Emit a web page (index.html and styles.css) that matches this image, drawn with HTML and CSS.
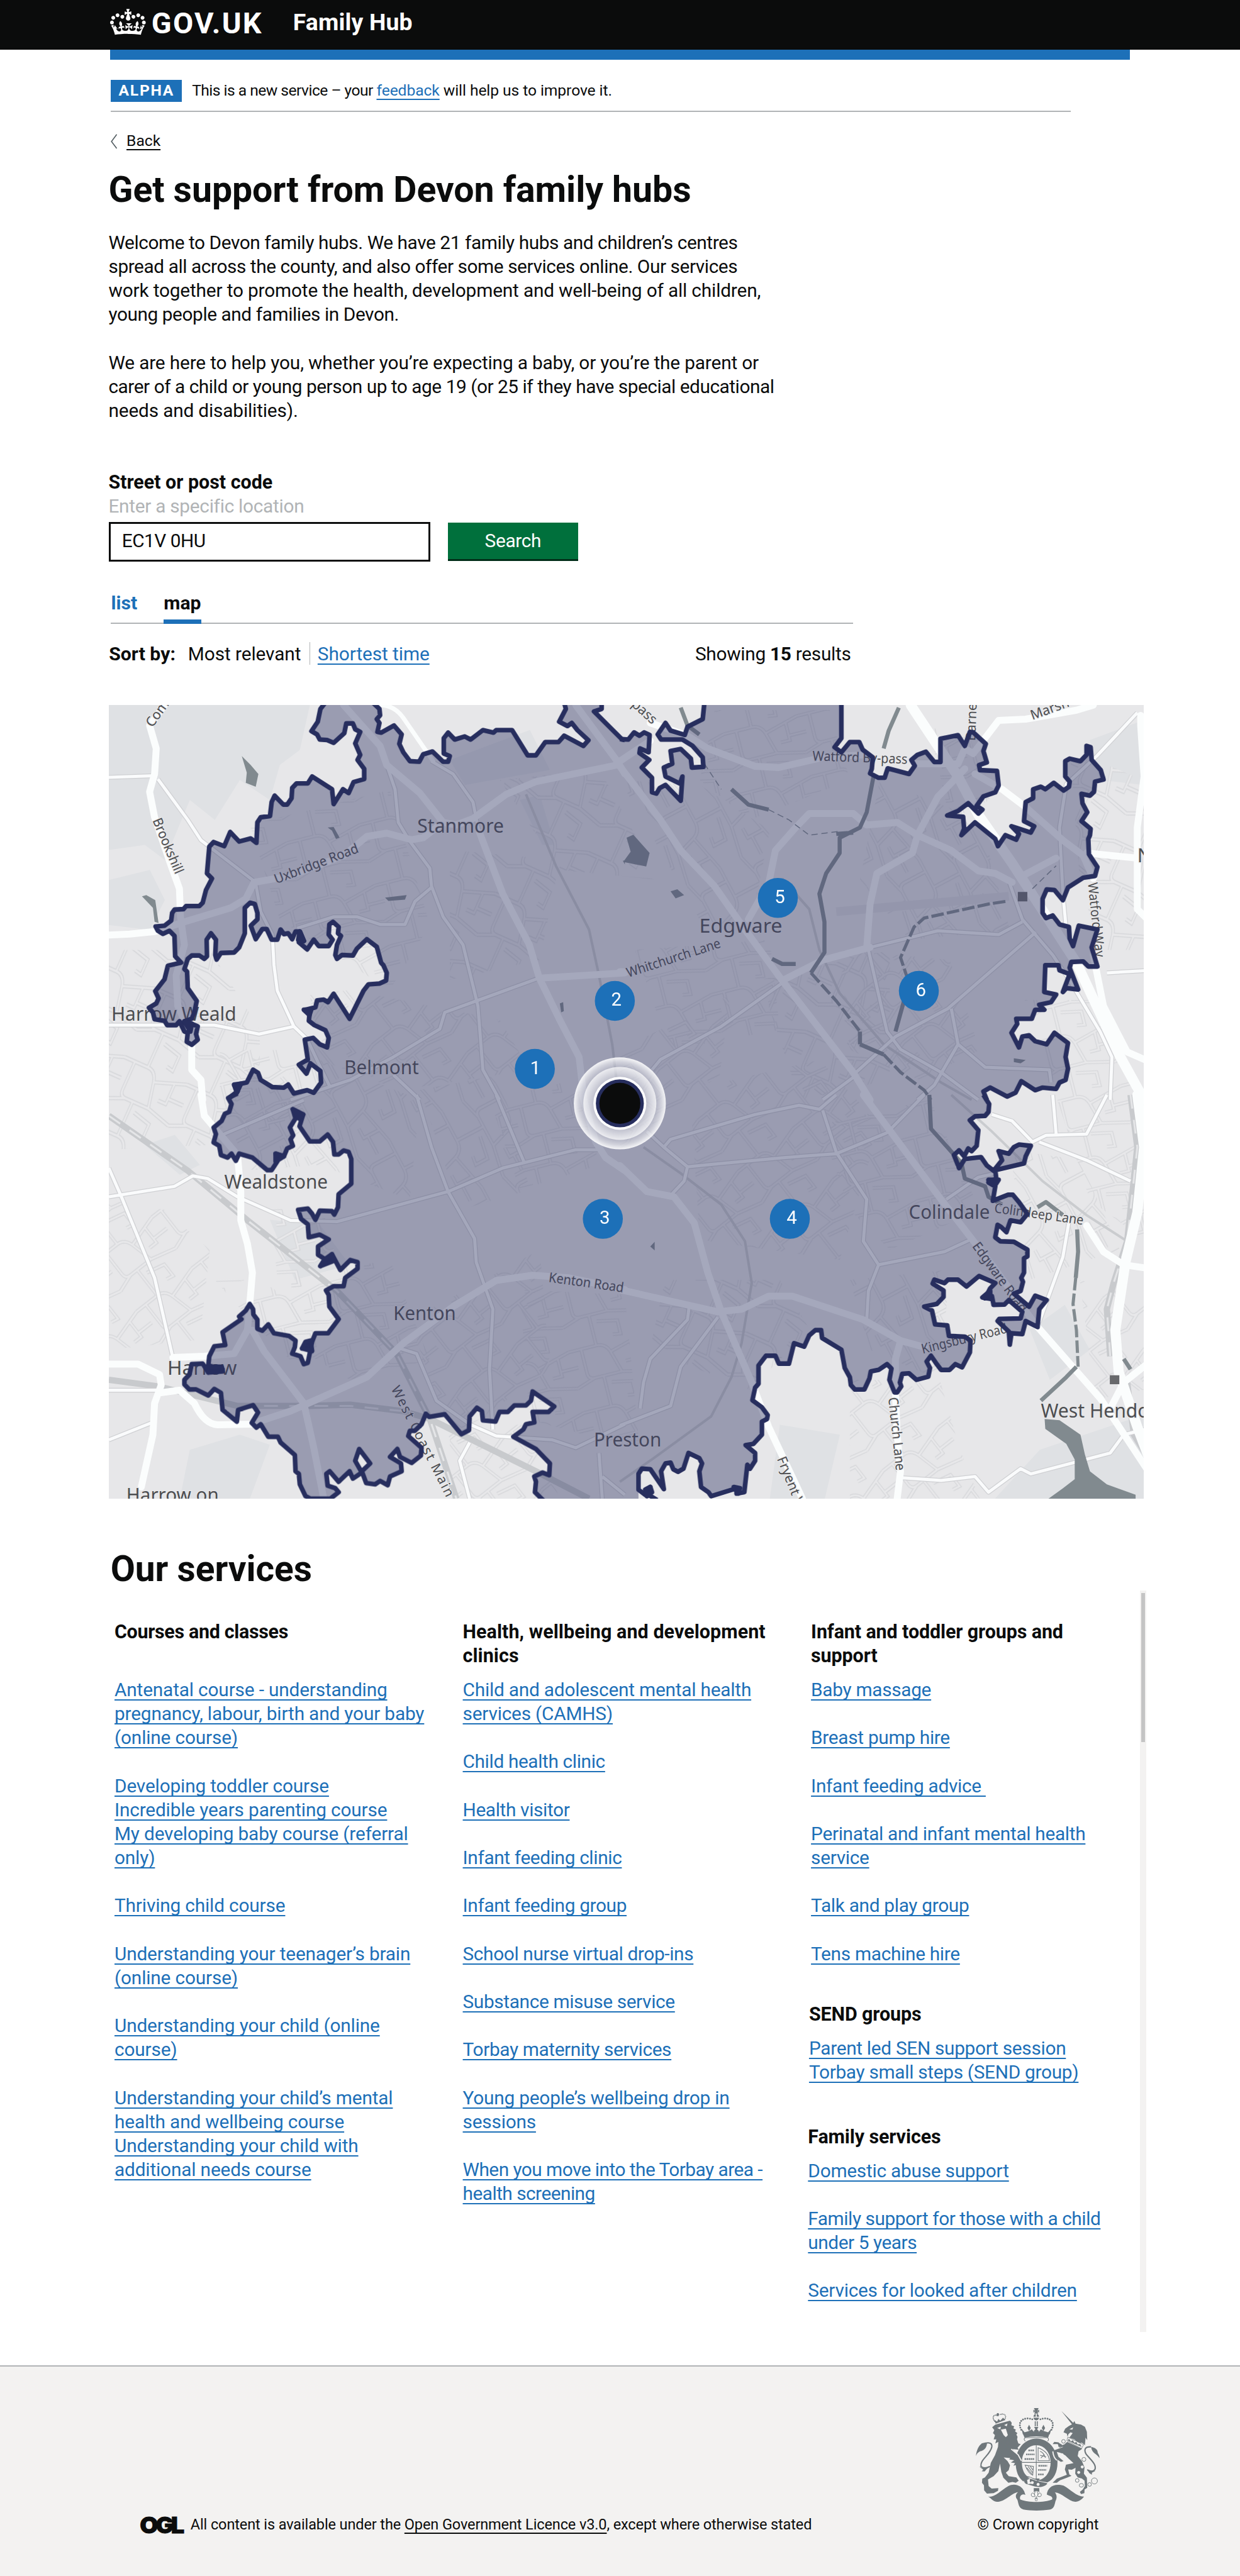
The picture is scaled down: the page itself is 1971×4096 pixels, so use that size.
FILE: index.html
```html
<!DOCTYPE html>
<html lang="en">
<head>
<meta charset="utf-8">
<title>Get support from Devon family hubs</title>
<link rel="stylesheet" href="styles.css">
</head>
<body>
<header class="header">
  <svg class="header-crown" viewBox="0 4 36 26" aria-hidden="true"><path fill="#fff" d="M6.7 12.2c1 .4 2.1-.1 2.5-1s-.1-2.1-1-2.5c-1-.4-2.1.1-2.5 1-.4 1 0 2.1 1 2.5m-4.3 2.5c1 .4 2.1-.1 2.5-1s-.1-2.1-1-2.5c-1-.4-2.1.1-2.5 1-.5 1 0 2.1 1 2.5m-1.3 4.8c1 .4 2.1-.1 2.5-1 .4-1-.1-2.1-1-2.5-1-.4-2.1.1-2.5 1-.4 1 0 2.1 1 2.5m10.4-5.8c1 .4 2.1-.1 2.5-1s-.1-2.1-1-2.5c-1-.4-2.1.1-2.5 1s0 2.1 1 2.5m17.4-1.5c-1 .4-2.1-.1-2.5-1s.1-2.1 1-2.5c1-.4 2.1.1 2.5 1 .5 1 0 2.1-1 2.5m4.3 2.5c-1 .4-2.1-.1-2.5-1s.1-2.1 1-2.5c1-.4 2.1.1 2.5 1 .5 1 0 2.1-1 2.5m1.3 4.8c-1 .4-2.1-.1-2.5-1-.4-1 .1-2.1 1-2.5 1-.4 2.1.1 2.5 1 .4 1 0 2.1-1 2.5m-10.4-5.8c-1 .4-2.1-.1-2.5-1s.1-2.1 1-2.5c1-.4 2.1.1 2.5 1s0 2.1-1 2.5m-5.3-4.9 2.4 1.3V6.5l-2.4.8c-.1-.1-.1-.2-.2-.2s1-3 1-3h-3.4l1 3c-.1.1-.2.1-.2.2-.1.1-2.4-.7-2.4-.7v3.5L17 8.8c.1.1.1.2.2.2l-1.3 4c-.1.2-.1.4-.1.6 0 1.1.8 2 1.9 2.2h.7c1-.2 1.9-1.1 1.9-2.1 0-.2 0-.4-.1-.6l-1.3-4c-.1-.2 0-.2.1-.3m-1 20.3c4.6 0 8.9.3 12.8.9 1.1-4.6 2.4-7.2 3.8-9.1l-2.6-.9c.3 1.3.3 1.9 0 2.8-.4-.4-.8-1.2-1.1-2.4l-1.2 4.2c.8-.5 1.4-.9 2-.9-1.2 2.6-2.7 3.2-3.6 3-1.2-.2-1.7-1.3-1.5-2.2.3-1.3 1.6-1.6 2.2-.1 1.1-2.4-.8-3.1-2-2.4 1.9-1.9 2.2-3.6.6-5.7-2.2 1.7-2.2 3.3-1.3 5.5-1.2-1.3-3.2-.6-2.5 1.6.9-1.4 2.1-.5 2 .8-.2 1.2-1.7 2.1-3.6 1.9-2.7-.2-2.9-2.2-2.9-3.6.7-.1 1.8.5 2.9 2l.4-4.4c-1.2 1.3-2.3 1.5-3.4 1.5.4-1.2 2.7-3.1 2.7-3.1h-5.8s2.4 1.9 2.7 3.1c-1.1 0-2.2-.2-3.4-1.5l.4 4.4c1.1-1.5 2.2-2.1 2.9-2-.1 1.5-.2 3.4-2.9 3.6-1.9.2-3.5-.7-3.6-1.9-.1-1.3 1.1-2.2 2-.8.7-2.3-1.3-2.9-2.5-1.6.9-2.2.9-3.8-1.3-5.5-1.6 2-1.3 3.8.6 5.7-1.2-.7-3.1 0-2 2.4.6-1.5 1.9-1.1 2.2.1.2.9-.3 1.9-1.5 2.2-.9.2-2.4-.5-3.6-3 .6 0 1.2.3 2 .9L4.7 20.3c-.3 1.1-.7 1.9-1.1 2.4-.3-.9-.2-1.5 0-2.8l-2.6.9C2.4 22.7 3.7 25.3 4.8 29.9c3.8-.5 8.2-.9 12.7-.9z"/></svg>
  <span class="header-logo">GOV.UK</span>
  <span class="header-service">Family Hub</span>
</header>
<div class="header-bar"></div>

<main>
  <div class="phase">
    <strong class="phase-tag">ALPHA</strong>
    <span class="phase-text"><span class="phase-lead">This is a new service – your </span><a href="#">feedback</a> will help us to improve it.</span>
  </div>

  <div class="back">
    <svg class="back-arrow" viewBox="0 0 13 30" aria-hidden="true"><path d="M12 1 1.5 15 12 29" fill="none" stroke="#505a5f" stroke-width="2"/></svg>
    <a href="#">Back</a>
  </div>

  <h1 class="title">Get support from Devon family hubs</h1>
  <p class="intro"><span class="snug">Welcome to Devon family hubs. We have 21 family hubs and children’s centres<br>spread all across the county, and also offer some services online. Our services</span><br>work together to promote the health, development and well-being of all children,<br><span class="snug">young people and families in Devon.</span></p>
  <p class="intro intro-second">We are here to help you, whether you’re expecting a baby, or you’re the parent or<br><span class="snug">carer of a child or young person up to age 19 (or 25 if they have special educational</span><br>needs and disabilities).</p>

  <form class="search">
    <label class="search-label">Street or post code</label>
    <span class="search-hint">Enter a specific location</span>
    <div class="search-row">
      <div class="search-input">EC1V 0HU</div>
      <div class="search-button">Search</div>
    </div>
  </form>

  <nav class="tabs">
    <a class="tab" href="#">list</a>
    <span class="tab tab-current">map</span>
  </nav>

  <div class="sort">
    <b class="sort-label">Sort by:</b>
    <span class="sort-current">Most relevant</span>
    <a class="sort-link" href="#">Shortest time</a>
    <span class="sort-count">Showing <b>15</b> results</span>
  </div>

  <svg class="map" viewBox="218 1410 2070 1588">
    <defs>
      <path id="tile-a" d="M0 40H90Q120 40 130 70L150 140M130 70 240 40M40 40V120Q40 140 60 140H150L240 160M0 160 60 140M90 140V200M90 0V40M200 50V110H170M0 95H18M240 95H200M110 165 175 178V200M175 0V22L150 18"/>
      <pattern id="p1" width="150" height="125" viewBox="0 0 240 200" patternUnits="userSpaceOnUse" patternTransform="rotate(-14)"><use href="#tile-a" class="st-a"/><use href="#tile-a" class="st-b"/></pattern>
      <pattern id="p2" width="136" height="150" viewBox="0 0 240 200" preserveAspectRatio="none" patternUnits="userSpaceOnUse" patternTransform="rotate(24)"><use href="#tile-a" class="st-a"/><use href="#tile-a" class="st-b"/></pattern>
      <pattern id="p3" width="170" height="120" viewBox="0 0 240 200" preserveAspectRatio="none" patternUnits="userSpaceOnUse" patternTransform="rotate(62)"><use href="#tile-a" class="st-a"/><use href="#tile-a" class="st-b"/></pattern>
      <pattern id="p4" width="140" height="130" viewBox="0 0 240 200" preserveAspectRatio="none" patternUnits="userSpaceOnUse" patternTransform="rotate(-38)"><use href="#tile-a" class="st-a"/><use href="#tile-a" class="st-b"/></pattern>

      <!-- secondary roads, one group per map sheet -->
      <g id="minor-roads">
        <g transform="translate(210 1400) scale(.66327 .5102)">
          <path d="M160 310 250 470 290 550 450 710M455 720 470 830 505 920 510 1040 520 1140 570 1280 610 1330 650 1440 680 1520M850 255 875 350 885 480 920 555 980 660 985 730 1020 850 1080 960 1110 1120 1125 1200 1140 1450 1190 1568M985 735 935 790 905 880 830 880 760 850 690 850 580 895M12 1275H330L465 1310 570 1280M1310 1090 1025 1225 1010 1290 870 1400 740 1490 560 1568M12 303 145 297M870 1470 950 1568M1130 530 1110 400 1050 290 985 240"/>
        </g>
        <g transform="translate(1240 1400) scale(.67642 .5102)">
          <path d="M740 970 940 905 1120 920 1190 870M480 1110 300 1280 120 1410 95 1450M735 980 790 1300 830 1370 950 1460 1060 1568M690 1470 815 1320 970 1210 1230 910M980 1210 1000 1350 1080 1440 1270 1450 1275 1500M1000 1350 930 1510 880 1568M1150 710 1190 860 1280 1000 1330 1100 1420 1300 1455 1400 1450 1568M1530 50 1410 220 1320 330 1300 500 1310 760 1320 900M1440 1070 1568 1060M690 1480 600 1568M1530 820 1568 870"/>
        </g>
        <g transform="translate(210 2190) scale(.66327 .52296)">
          <path d="M12 280 50 390 150 700 205 1005M12 390 210 350 265 310 310 320 400 390 560 480 700 485 1035 370 1200 280 1420 210H1490M940 0 985 200 1035 370 1115 550 1120 640 1170 820 1160 1050 1170 1280M1180 0 1265 260M890 970 940 990 1000 1170 1100 1260 1180 1305 1350 1320 1420 1350 1568 1260M12 1130H160M12 1320 140 1255M1100 1330 1070 1400 1100 1545M1490 1370 1500 1545M350 155 600 20M1500 1460 1568 1530"/>
        </g>
        <g transform="translate(1240 2190) scale(.67642 .52296)">
          <path d="M0 1265 150 1190 180 1040 290 850M60 1200 70 1100 90 1010 200 860 205 810M130 200 150 170 400 75 530 40 590 55 640 0M600 60 640 220 730 400 720 560 765 650 735 750 730 860M765 650 960 600 1035 555M200 275 280 265 485 240 640 225 790 145 900 0M80 140 130 200 200 275 190 330 150 385M965 400 1060 315 1110 300M835 1465 950 1475 1050 1460 1090 1520 1185 1430 1215 1450 1450 1370 1490 1300 1568 1275M1100 75 1160 100 1220 180 1260 155 1380 150 1440 0M1280 0 1290 150M1240 180 1380 250 1510 330M1330 470 1310 620 1240 870"/>
        </g>
      </g>
    </defs>

    <rect class="land" x="218" y="1410" width="2070" height="1588"/>

    <!-- open ground -->
    <g fill="#dfe1e4">
      <path d="M218 1410H620L600 1500 560 1530 540 1600 480 1560 430 1640 380 1600 330 1720 290 1690 218 1700ZM218 1760 300 1740 330 1800 300 1860 218 1850Z"/>
      <path d="M290 2290 350 2270 400 2330 360 2350ZM540 2440 640 2450 700 2530 590 2560ZM380 2900 480 2870 540 2890 500 2998H360Z"/>
      <path d="M2060 2660 2130 2610 2180 2700 2100 2760ZM1560 2850 1680 2870 1650 2998H1540ZM2080 2900 2288 2830V2998H1990Z"/>
      <path d="M900 1520 1060 1460 1100 1540 930 1570ZM1040 1600 1080 1590 1110 1690 1085 1690ZM2180 1480 2288 1440V1570L2200 1560Z"/>
    </g>

    <!-- residential streets -->
    <path fill="url(#p1)" d="M500 1650 780 1580 860 1850 780 1980 560 1840ZM1430 1420 1660 1420 1700 1560 1500 1640 1400 1560ZM560 2560 780 2520 860 2720 700 2760 600 2700ZM1040 2580 1250 2590 1280 2900 1060 2840ZM1270 1900 1540 1880 1560 2060 1340 2100Z"/>
    <path fill="url(#p2)" d="M218 1900 420 1900 520 2060 520 2150 420 2290 218 2300ZM900 1700 1120 1720 1080 1920 900 1960ZM1330 2560 1560 2560 1620 2660 1500 2780 1300 2700ZM1520 1960 1780 1900 1780 2160 1600 2200ZM2140 1500 2288 1560V1900H2200L2160 1760ZM1000 1560 1200 1540 1320 1760 1120 1740Z"/>
    <path fill="url(#p3)" d="M440 2210 640 2120 840 2200 820 2400 640 2330 500 2340ZM840 2180 1000 2150 1060 2380 920 2420ZM1240 1560 1400 1570 1540 1660 1500 1860 1400 1840ZM1760 1560 1960 1640 2020 1860 1820 1880 1720 1760ZM1700 2560 1900 2540 1880 2760 1740 2700ZM2020 2300 2160 2320 2240 2500 2060 2560Z"/>
    <path fill="url(#p4)" d="M218 2400 330 2420 420 2500 400 2680 218 2700ZM1380 2180 1640 2120 1760 2250 1680 2520 1400 2480ZM620 1990 700 1980 1000 2040 1060 2140 800 2180 640 2120ZM820 2640 1080 2500 1100 2740 900 2880ZM2160 2560 2288 2600V2780L2190 2800ZM900 2850 1060 2850 1120 2998H900ZM1680 1900 1900 1920 1960 2100 1840 2160 1700 2100ZM1440 2150 1240 2300 1240 2100 1460 1990ZM1700 2760 1880 2760 1920 2900 1960 2998H1700Z"/>
    <path fill="url(#p1)" d="M440 2100 620 2100 600 2280 440 2240ZM980 2200 1150 2160 1200 2330 1040 2380ZM1860 1460 1930 1440 1980 1600 1900 1640ZM2050 2000 2200 2000 2288 2200V2480L2180 2400ZM1640 2250 1860 2200 1960 2420 1780 2500 1700 2420ZM540 2420 640 2400 680 2540 560 2600ZM430 2560 520 2560 640 2640 600 2740 500 2640Z"/>

    <!-- railways -->
    <g class="rail">
      <g transform="translate(210 1400) scale(.66327 .5102)"><path d="M1270 370 1360 650 1460 900 1490 1080 1530 1350 1550 1568" class="thin"/></g>
      <g transform="translate(1240 1400) scale(.67642 .5102)"><path d="M480 700 560 820 590 980 650 1150 780 1350 950 1500 1040 1568M1150 720 1200 880 1290 1020" class="thin"/><path d="M640 830 1150 770" class="faint"/></g>
      <g transform="translate(210 2190) scale(.66327 .52296)"><path d="M12 80 250 290 430 480 700 750 880 990 980 1240 1060 1545M12 1090 160 1115 400 1190 620 1190 740 1185 900 1210 980 1240 1300 1440 1460 1545"/><path class="dash" d="M12 80 250 290 430 480 700 750 880 990 980 1240 1060 1545M480 1190H740L900 1210"/></g>
      <g transform="translate(1240 2190) scale(.67642 .52296)"><path class="thin" d="M70 200 180 300 300 420 370 560 390 720 360 950 330 1080 270 1230 100 1390 0 1480M980 0 1100 140 1250 330 1380 460 1500 560"/><path d="M1510 0 1530 200 1500 560 1460 720 1440 820 1450 1000M1500 1100 1520 1300 1568 1400"/><path class="dash" d="M1510 0 1530 200 1500 560 1460 720 1440 820 1450 1000"/></g>
    </g>

    <use href="#minor-roads" class="road-edge"/>
    <use href="#minor-roads" class="road-mid"/>

    <g class="road-main">
      <g transform="translate(210 1400) scale(.66327 .5102)">
        <path d="M0 922 75 918 150 908 240 870 380 815 425 780 450 715 560 690 720 610 790 535 850 522 925 548 960 540 1020 480 1060 490 1110 465 1210 370 1300 320 1545 255M180 20 135 100 155 190 150 290 135 360 150 460 200 650 225 740 228 850 240 960 215 1080 220 1200 262 1320V1450L290 1490 295 1568M720 20 830 180 850 255 950 365 1020 480M1130 520 1200 760 1280 960 1310 1090 1370 1250 1430 1400 1445 1568M1420 20 1545 240 1568 290M1320 1090 1568 1070"/>
        <path class="slim" d="M820 20Q870 15 900 70L990 240"/>
      </g>
      <g transform="translate(1240 1400) scale(.67642 .5102)">
        <path d="M0 260 120 470 180 590 280 730 370 900 480 1100 690 1460 740 1568M90 90 200 140 260 190 400 260 470 265 600 225 720 215M870 250H1000L1020 190 1045 210 1120 80 1200 75 1350 40 1400 20M1020 270 940 380 880 530 865 600 760 680 740 800 730 970M380 860 440 720 460 590 520 500 560 445H690L730 490 820 480 880 530 980 590 1060 670 1110 680 1160 715M480 1100 600 1020 740 970M1190 690 1290 620M1380 600 1530 620M1540 60V100L1550 300 1530 500V820L1568 870M1400 1000 1430 1200 1500 1380 1568 1420M0 1065H30M1050 290 1130 350 1200 420 1310 550 1370 610 1400 700M0 240 90 160"/>
        <path class="wide" d="M860 20 1000 300 1060 450 1160 640 1350 1030 1480 1400 1550 1568"/>
      </g>
      <g transform="translate(210 2190) scale(.66327 .52296)">
        <path d="M290 0 300 80 400 230 410 370V480L430 570 445 680 437 800 430 900 390 990 300 1000 205 1005M12 1030H100L165 1070 170 1110 150 1180 145 1300 110 1500M165 1140 225 1130 270 1180Q300 1260 340 1262L440 1260 560 1210 640 1165 790 1080 900 950 1050 810 1180 710 1290 690 1400 700 1568 745M445 900 480 980 600 1180 630 1350 660 1545M1440 0 1480 180 1510 240 1568 290"/>
      </g>
      <g transform="translate(1240 2190) scale(.67642 .52296)">
        <path d="M0 270 80 370 160 390 220 490 260 680 300 830 390 1100 440 1270 540 1545M0 745 290 830 360 820 440 770H510L720 860 830 940 900 965M720 0 950 400 1100 650 1230 880 1420 1160 1568 1450M830 940 815 1010V1140L820 1300 830 1440 820 1545M1380 500 1430 600 1490 650 1568 665M1450 1200 1490 1100 1568 1020"/>
        <path class="wide" d="M1530 0 1550 200 1530 450 1495 640 1465 900 1475 1060 1530 1270 1568 1400"/>
      </g>
    </g>

    <!-- water and stations -->
    <g class="river">
      <g transform="translate(1240 1400) scale(.67642 .5102)">
        <path d="M750 300 730 440 710 500 650 540V600L610 680 590 760 605 870V990L565 1070M450 1015 480 1035H520M710 1350 780 1390M710 1300V1350M840 1180 815 1300M330 350 380 410 440 430M640 525 690 520M825 30 795 120 780 190M180 30 200 100 235 135"/>
        <path class="dashes" d="M565 1070 640 1180 710 1300M780 1390 830 1460 900 1530 920 1568M1140 790 1090 800 900 855 870 890 830 1010 850 1090"/>
        <path class="hair" d="M250 250 300 350M440 430 500 470 560 530 650 515M1220 740 1290 650"/>
      </g>
      <g transform="translate(1240 2190) scale(.67642 .52296)">
        <path d="M915 0 920 130 1010 260 1020 320 1080 350 1090 390 1130 420M1235 430 1260 410 1310 460M1352 515 1355 600 1348 700M1350 1040 1320 1080 1245 1170M1490 1010 1510 1050"/>
        <path class="dashes" d="M1348 700 1340 800 1350 900 1355 1040"/>
      </g>
    </g>
    <g fill="#818a8f">
      <g transform="translate(210 1400) scale(.66327 .5102)"><path d="M413 220 440 255 463 290 455 340 425 325 428 285ZM112 770 125 765 152 785 162 875 150 870 145 815ZM672 500 690 498 708 540 697 545 685 512ZM845 775 910 765 905 783 855 788ZM1372 1190 1382 1185 1384 1220 1376 1225ZM1562 630H1568V645Z"/></g>
      <g transform="translate(1240 1400) scale(.67642 .5102)"><path d="M20 540 40 528 88 600 78 653 10 635 32 595ZM150 750 170 742 190 765 165 778ZM1165 1405 1200 1412 1185 1425 1165 1420Z"/></g>
      <g transform="translate(1240 2190) scale(.67642 .52296)"><path d="M1256 1240 1300 1245 1362 1300 1375 1375 1390 1440 1440 1490 1525 1530V1550H1262L1310 1505 1345 1470V1395L1320 1335 1258 1278ZM90 580 103 562V595Z"/></g>
    </g>
    <path fill="#68696c" d="M2036 1784h19v19h-19zM2220 2751h19v18h-19z"/>

    <!-- place names -->
    <g class="places">
      <text x="835" y="1666" textLength="173" lengthAdjust="spacingAndGlyphs">Stanmore</text>
      <text x="223" y="2042" textLength="250" lengthAdjust="spacingAndGlyphs">Harrow Weald</text>
      <text x="689" y="2148" textLength="149" lengthAdjust="spacingAndGlyphs">Belmont</text>
      <text x="1399" y="1865" textLength="166" lengthAdjust="spacingAndGlyphs">Edgware</text>
      <text x="449" y="2377" textLength="207" lengthAdjust="spacingAndGlyphs">Wealdstone</text>
      <text x="787" y="2641" textLength="125" lengthAdjust="spacingAndGlyphs">Kenton</text>
      <text x="335" y="2750" textLength="139" lengthAdjust="spacingAndGlyphs">Harrow</text>
      <text x="1188" y="2893" textLength="135" lengthAdjust="spacingAndGlyphs">Preston</text>
      <text x="253" y="3004" textLength="185" lengthAdjust="spacingAndGlyphs">Harrow on</text>
      <text x="1818" y="2438" textLength="162" lengthAdjust="spacingAndGlyphs">Colindale</text>
      <text x="2082" y="2835" textLength="240" lengthAdjust="spacingAndGlyphs">West Hendon</text>
      <text x="2275" y="1724">N</text>
    </g>
    <g class="streets">
      <text transform="translate(553 1768) rotate(-21)" textLength="178" lengthAdjust="spacingAndGlyphs">Uxbridge Road</text>
      <text transform="translate(305 1641) rotate(67)" textLength="118" lengthAdjust="spacingAndGlyphs">Brookshill</text>
      <text transform="translate(305 1456) rotate(-54)">Com</text>
      <text transform="translate(1257 1955) rotate(-18)" textLength="196" lengthAdjust="spacingAndGlyphs">Whitchurch Lane</text>
      <text transform="translate(1625 1521) rotate(2)" textLength="190" lengthAdjust="spacingAndGlyphs">Watford By-pass</text>
      <text transform="translate(2065 1440) rotate(-20)">Marsh Lane</text>
      <text transform="translate(1951 1482) rotate(-88)">Barnet</text>
      <text transform="translate(2176 1766) rotate(84)" textLength="150" lengthAdjust="spacingAndGlyphs">Watford Way</text>
      <text transform="translate(1262 1411) rotate(42)">pass</text>
      <text transform="translate(1097 2564) rotate(8)" textLength="151" lengthAdjust="spacingAndGlyphs">Kenton Road</text>
      <text transform="translate(782 2778) rotate(63)" textLength="245">West Coast Main</text>
      <text transform="translate(1988 2425) rotate(8)" textLength="180" lengthAdjust="spacingAndGlyphs">Colindeep Lane</text>
      <text transform="translate(1944 2493) rotate(54)" textLength="166" lengthAdjust="spacingAndGlyphs">Edgware Road</text>
      <text transform="translate(1846 2708) rotate(-14)" textLength="176" lengthAdjust="spacingAndGlyphs">Kingsbury Road</text>
      <text transform="translate(1777 2796) rotate(84)" textLength="147" lengthAdjust="spacingAndGlyphs">Church Lane</text>
      <text transform="translate(1554 2918) rotate(68)">Fryent Way</text>
    </g>

    <!-- catchment area -->
    <g opacity=".45" fill="#3c406d">
      <path transform="translate(210 1400) scale(.66327 .5102)" d="M665 15 650 35 642 85 623 122 640 135 648 155 670 157 690 168 722 130 728 92H748L755 115 770 125 755 170 770 215 762 235 782 270V310L750 322 735 365 718 350 690 408 685 350 625 300 612 327H578L565 345 563 385 550 410H538L512 375 503 400 498 455 470 460 460 480 457 560 440 543 405 555 378 518 360 573 328 557 315 575 308 680 323 700 305 745 295 795 285 808H245L237 820 210 822 203 835 200 865 180 885 153 888 160 905 175 917 195 905 210 925 212 1005 230 1030 190 1042 180 1095 152 1142 162 1170 155 1190 133 1207 145 1225 150 1252 180 1258 188 1275H215L225 1260 240 1300 250 1305 247 1340 262 1352 280 1332 275 1310 280 1280 262 1270 258 1300 240 1260 262 1250 270 1225 277 1180 250 1130 248 1065 240 1055 250 1015 262 1002H285L300 1015 308 1005 307 940 320 915 335 940 333 1000 337 1018 350 992 390 990 405 970 422 915V815L438 795 452 800 460 835V860L440 885 455 938 475 898H488L503 940H520L530 900 540 918 553 915 565 938 575 908H588L600 945 585 950 610 978 630 940 645 965H675L687 940 675 920 677 880 688 870 705 890 703 915 712 925 700 960 695 1000 700 1015 715 1000 748 1002 760 975 790 938 820 968 833 1030 840 1040 850 1070 848 1100 828 1112 795 1115 780 1140 738 1250 690 1152 673 1185 660 1175 640 1178 635 1205 605 1215 617 1235 615 1258 632 1275 665 1295 675 1325 670 1362 648 1350 628 1325 603 1332 612 1410 585 1430 608 1465 620 1425 650 1455 652 1500 630 1540 610 1530 570 1543 553 1508 540 1520 505 1518 470 1490 462 1462 447 1450 428 1500 390 1510 400 1535 375 1560V1568H1600V157H1568L1560 155 1475 45 1498 35V15H1385L1390 35 1370 85 1395 102 1408 90 1425 118 1458 158 1443 180 1385 140 1368 165H1328L1300 217H1275L1228 118H1180L1172 128 1140 118 1103 155 1085 143 1055 155 1035 128 1022 150V210L1040 220 1035 242H1020L988 202 960 213 948 242 920 240 900 205 888 172 895 135 872 100 833 128 822 125 828 90 820 75 830 60 828 35 808 15Z"/>
      <path transform="translate(1240 1400) scale(.67642 .5102)" d="M0 153 25 155 42 127 58 140 72 127 88 137 85 205 60 190 58 208 87 235 65 265 95 305V362L108 367 118 345 135 333 180 395 185 300 178 328 135 300 130 265 155 250 150 200 180 192 210 230 213 265 247 262 245 225 215 180 185 155H122L112 135 135 90 150 120 192 137 200 105 245 75 250 15H655V150L635 185 655 205 680 165H708L718 195 748 225 745 270 740 288 765 305H783L792 268 855 290 872 258 862 235 880 215 905 203 930 243H948V152L1000 138 1020 180 1035 125 1045 127 1082 172 1075 200 1085 245 1062 255 1065 275 1115 278 1120 335 1110 362 1075 378 1055 415 1072 430 1060 445 1030 405 1000 435 968 453 1015 458 1018 505 1010 530 1050 480 1110 545 1118 573 1140 530 1172 548 1180 525 1158 495 1215 520 1225 495 1195 475 1200 400 1222 385V350L1245 340 1258 350 1283 325 1312 355 1328 340 1330 320 1317 300V240L1330 230 1362 240 1380 215V180L1392 185 1395 235 1422 275 1430 312 1405 320 1402 360 1390 375 1365 368 1368 405 1382 440 1365 475 1392 505 1390 530 1385 545 1387 605 1412 655 1405 690 1370 697 1325 735 1310 785 1285 745 1262 743 1250 780V835L1260 855 1280 845 1300 880 1328 890 1330 935 1340 965 1357 885 1412 900 1395 970 1412 1045H1385L1370 1025 1335 1027 1330 1050 1355 1135 1320 1130 1310 1145 1330 1075 1300 1060 1297 1040H1258L1255 1145 1290 1155 1275 1185 1240 1195 1255 1215H1228L1218 1250H1172L1175 1270 1158 1305 1180 1362 1190 1320 1210 1315 1228 1338 1262 1350 1285 1305 1325 1345 1318 1400 1325 1445 1318 1490 1300 1500 1290 1525 1250 1520 1228 1530 1187 1495 1170 1540 1145 1555 1095 1520 1075 1535 1085 1568H0Z"/>
      <path transform="translate(210 2190) scale(.66327 .52296)" d="M372 5V12L382 35 375 65 362 72 352 100 328 125 335 150 328 182 345 195 350 230 370 240 382 225 395 252 405 225 445 240 490 288H503L520 255 515 225 540 235 550 205 567 195 560 170 568 155 558 125 575 90 567 55 598 75 587 120 618 178H648L672 152 688 180 692 228H705L720 213 735 218 743 245V340L705 380 703 430 692 458 685 445 648 443 635 478 625 455 612 435 583 440 592 475 612 495 615 545 648 535 675 553 643 580V612L663 628 650 655 685 610 710 670 740 632 762 640V665L725 700 720 732H690L667 748 675 765 677 810 705 858 673 912H635L620 960 595 970 625 945 612 1025 600 1030 590 1000 565 990 573 965 575 940 555 922 510 912 493 878 475 902 460 895V860L448 840 447 820 437 800 425 825 405 848 412 858 355 908 363 957 330 962 315 1000 312 1035 355 1050 312 1062 295 1028 262 1030 255 1070 240 1090V1108L255 1127H275L312 1150 330 1125 350 1140 355 1205 398 1250 402 1205 447 1187 462 1215 443 1255 457 1273 470 1260 493 1308H522L530 1330 573 1378 575 1440 585 1450 588 1490 605 1535 620 1550H680L705 1520 695 1505 672 1495 668 1450 678 1440 705 1480 738 1440 748 1468 775 1445 755 1400 767 1355 800 1410 775 1440 788 1485 815 1490 830 1477 853 1493 860 1460 895 1440 893 1410 860 1385 882 1355 890 1385 925 1408 953 1380 955 1350 915 1305 920 1285H935L955 1260 968 1220 978 1232 1025 1222 1075 1298 1098 1283 1100 1230 1122 1197 1137 1210 1140 1245 1178 1250 1190 1213H1215L1235 1188H1270L1285 1170 1290 1135 1355 1192 1338 1213H1290L1295 1253 1270 1260 1262 1280 1232 1308 1300 1355 1342 1410 1340 1455 1320 1445 1295 1460 1300 1480 1297 1520 1320 1550H1600V5Z"/>
      <path transform="translate(1240 2190) scale(.67642 .52296)" d="M0 0H1075L1092 35 1090 65 1080 80 1050 82 1035 97 1060 135 1055 195 1040 215 1030 205 1018 235 1003 212 988 230 1003 280 1020 245 1068 238 1085 270 1105 290 1130 250 1120 215 1150 225 1165 200 1180 190 1215 195 1200 235 1195 262 1110 288 1113 320 1090 335 1110 350 1103 405 1148 382H1162L1180 410 1205 455 1185 487 1155 480 1143 525 1127 505 1117 497 1110 545 1125 560 1165 562 1205 592V618L1195 625V680L1187 700 1192 715 1185 750 1165 760 1210 810 1228 768 1262 785 1240 820 1235 888 1200 865 1190 915 1158 912 1153 955 1150 905 1117 865 1122 857 1185 855 1190 830 1150 785 1137 802 1105 803 1100 770 1080 778 1095 740 1110 720 1062 693 1025 733 1000 707H970L960 720 930 707 925 722 957 748V773L937 800 900 810 923 825 932 878 968 882 973 922 1020 925 1037 940 1035 985 1012 1042 992 1030 975 1052H950L937 1030 920 998 907 1020 917 1045 912 1078 877 1090 855 1065 835 1067 828 1100 832 1115 820 1138H812L797 1090 803 1047 790 1030 765 1052 742 1058 738 1085 723 1127H695L683 1110 680 1080 665 1045 655 975 598 930 595 900H578L560 920 545 963 515 950 500 1028H470L460 998H432L410 1035V1105L400 1120 392 1168 420 1195 437 1225 435 1240 420 1250V1300L395 1335 372 1340 400 1370V1400L385 1430 377 1415 368 1520 345 1525V1505L270 1535 262 1520 240 1500 235 1440 243 1410 235 1390 203 1370 188 1430 172 1442 158 1432 150 1407 135 1410 122 1440 130 1508 90 1432 65 1430 55 1450V1550H0Z"/>
    </g>
    <g class="boundary">
      <path transform="translate(210 1400) scale(.66327 .5102)" d="M665 10 650 35 642 85 623 122 640 135 648 155 670 157 690 168 722 130 728 92H748L755 115 770 125 755 170 770 215 762 235 782 270V310L750 322 735 365 718 350 690 408 685 350 625 300 612 327H578L565 345 563 385 550 410H538L512 375 503 400 498 455 470 460 460 480 457 560 440 543 405 555 378 518 360 573 328 557 315 575 308 680 323 700 305 745 295 795 285 808H245L237 820 210 822 203 835 200 865 180 885 153 888 160 905 175 917 195 905 210 925 212 1005 230 1030 190 1042 180 1095 152 1142 162 1170 155 1190 133 1207 145 1225 150 1252 180 1258 188 1275H215L225 1260 240 1300 250 1305 247 1340 262 1352 280 1332 275 1310 280 1280 262 1270 258 1300 240 1260 262 1250 270 1225 277 1180 250 1130 248 1065 240 1055 250 1015 262 1002H285L300 1015 308 1005 307 940 320 915 335 940 333 1000 337 1018 350 992 390 990 405 970 422 915V815L438 795 452 800 460 835V860L440 885 455 938 475 898H488L503 940H520L530 900 540 918 553 915 565 938 575 908H588L600 945 585 950 610 978 630 940 645 965H675L687 940 675 920 677 880 688 870 705 890 703 915 712 925 700 960 695 1000 700 1015 715 1000 748 1002 760 975 790 938 820 968 833 1030 840 1040 850 1070 848 1100 828 1112 795 1115 780 1140 738 1250 690 1152 673 1185 660 1175 640 1178 635 1205 605 1215 617 1235 615 1258 632 1275 665 1295 675 1325 670 1362 648 1350 628 1325 603 1332 612 1410 585 1430 608 1465 620 1425 650 1455 652 1500 630 1540 610 1530 570 1543 553 1508 540 1520 505 1518 470 1490 462 1462 447 1450 428 1500 390 1510 400 1535 375 1560M1568 157 1560 155 1475 45 1498 35V10M1385 10 1390 35 1370 85 1395 102 1408 90 1425 118 1458 158 1443 180 1385 140 1368 165H1328L1300 217H1275L1228 118H1180L1172 128 1140 118 1103 155 1085 143 1055 155 1035 128 1022 150V210L1040 220 1035 242H1020L988 202 960 213 948 242 920 240 900 205 888 172 895 135 872 100 833 128 822 125 828 90 820 75 830 60 828 35 808 10"/>
      <path transform="translate(1240 1400) scale(.67642 .5102)" d="M0 153 25 155 42 127 58 140 72 127 88 137 85 205 60 190 58 208 87 235 65 265 95 305V362L108 367 118 345 135 333 180 395 185 300 178 328 135 300 130 265 155 250 150 200 180 192 210 230 213 265 247 262 245 225 215 180 185 155H122L112 135 135 90 150 120 192 137 200 105 245 75 250 10M655 10V150L635 185 655 205 680 165H708L718 195 748 225 745 270 740 288 765 305H783L792 268 855 290 872 258 862 235 880 215 905 203 930 243H948V152L1000 138 1020 180 1035 125 1045 127 1082 172 1075 200 1085 245 1062 255 1065 275 1115 278 1120 335 1110 362 1075 378 1055 415 1072 430 1060 445 1030 405 1000 435 968 453 1015 458 1018 505 1010 530 1050 480 1110 545 1118 573 1140 530 1172 548 1180 525 1158 495 1215 520 1225 495 1195 475 1200 400 1222 385V350L1245 340 1258 350 1283 325 1312 355 1328 340 1330 320 1317 300V240L1330 230 1362 240 1380 215V180L1392 185 1395 235 1422 275 1430 312 1405 320 1402 360 1390 375 1365 368 1368 405 1382 440 1365 475 1392 505 1390 530 1385 545 1387 605 1412 655 1405 690 1370 697 1325 735 1310 785 1285 745 1262 743 1250 780V835L1260 855 1280 845 1300 880 1328 890 1330 935 1340 965 1357 885 1412 900 1395 970 1412 1045H1385L1370 1025 1335 1027 1330 1050 1355 1135 1320 1130 1310 1145 1330 1075 1300 1060 1297 1040H1258L1255 1145 1290 1155 1275 1185 1240 1195 1255 1215H1228L1218 1250H1172L1175 1270 1158 1305 1180 1362 1190 1320 1210 1315 1228 1338 1262 1350 1285 1305 1325 1345 1318 1400 1325 1445 1318 1490 1300 1500 1290 1525 1250 1520 1228 1530 1187 1495 1170 1540 1145 1555 1095 1520 1075 1535 1085 1568"/>
      <path transform="translate(210 2190) scale(.66327 .52296)" d="M400 -5 372 12 382 35 375 65 362 72 352 100 328 125 335 150 328 182 345 195 350 230 370 240 382 225 395 252 405 225 445 240 490 288H503L520 255 515 225 540 235 550 205 567 195 560 170 568 155 558 125 575 90 567 55 598 75 587 120 618 178H648L672 152 688 180 692 228H705L720 213 735 218 743 245V340L705 380 703 430 692 458 685 445 648 443 635 478 625 455 612 435 583 440 592 475 612 495 615 545 648 535 675 553 643 580V612L663 628 650 655 685 610 710 670 740 632 762 640V665L725 700 720 732H690L667 748 675 765 677 810 705 858 673 912H635L620 960 595 970 625 945 612 1025 600 1030 590 1000 565 990 573 965 575 940 555 922 510 912 493 878 475 902 460 895V860L448 840 447 820 437 800 425 825 405 848 412 858 355 908 363 957 330 962 315 1000 312 1035 355 1050 312 1062 295 1028 262 1030 255 1070 240 1090V1108L255 1127H275L312 1150 330 1125 350 1140 355 1205 398 1250 402 1205 447 1187 462 1215 443 1255 457 1273 470 1260 493 1308H522L530 1330 573 1378 575 1440 585 1450 588 1490 605 1535 620 1545H680L705 1520 695 1505 672 1495 668 1450 678 1440 705 1480 738 1440 748 1468 775 1445 755 1400 767 1355 800 1410 775 1440 788 1485 815 1490 830 1477 853 1493 860 1460 895 1440 893 1410 860 1385 882 1355 890 1385 925 1408 953 1380 955 1350 915 1305 920 1285H935L955 1260 968 1220 978 1232 1025 1222 1075 1298 1098 1283 1100 1230 1122 1197 1137 1210 1140 1245 1178 1250 1190 1213H1215L1235 1188H1270L1285 1170 1290 1135 1355 1192 1338 1213H1290L1295 1253 1270 1260 1262 1280 1232 1308 1300 1355 1342 1410 1340 1455 1320 1445 1295 1460 1300 1480 1297 1520 1325 1555"/>
      <path transform="translate(1240 2190) scale(.67642 .52296)" d="M1075 0 1092 35 1090 65 1080 80 1050 82 1035 97 1060 135 1055 195 1040 215 1030 205 1018 235 1003 212 988 230 1003 280 1020 245 1068 238 1085 270 1105 290 1130 250 1120 215 1150 225 1165 200 1180 190 1215 195 1200 235 1195 262 1110 288 1113 320 1090 335 1110 350 1103 405 1148 382H1162L1180 410 1205 455 1185 487 1155 480 1143 525 1127 505 1117 497 1110 545 1125 560 1165 562 1205 592V618L1195 625V680L1187 700 1192 715 1185 750 1165 760 1210 810 1228 768 1262 785 1240 820 1235 888 1200 865 1190 915 1158 912 1153 955 1150 905 1117 865 1122 857 1185 855 1190 830 1150 785 1137 802 1105 803 1100 770 1080 778 1095 740 1110 720 1062 693 1025 733 1000 707H970L960 720 930 707 925 722 957 748V773L937 800 900 810 923 825 932 878 968 882 973 922 1020 925 1037 940 1035 985 1012 1042 992 1030 975 1052H950L937 1030 920 998 907 1020 917 1045 912 1078 877 1090 855 1065 835 1067 828 1100 832 1115 820 1138H812L797 1090 803 1047 790 1030 765 1052 742 1058 738 1085 723 1127H695L683 1110 680 1080 665 1045 655 975 598 930 595 900H578L560 920 545 963 515 950 500 1028H470L460 998H432L410 1035V1105L400 1120 392 1168 420 1195 437 1225 435 1240 420 1250V1300L395 1335 372 1340 400 1370V1400L385 1430 377 1415 368 1520 345 1525V1505L270 1535 262 1520 240 1500 235 1440 243 1410 235 1390 203 1370 188 1430 172 1442 158 1432 150 1407 135 1410 122 1440 130 1508 90 1432 65 1430 55 1450V1510L75 1530 90 1500 85 1530 110 1550"/>
      <g class="blob">
        <path transform="translate(210 1400) scale(.66327 .5102)" d="M588 908 600 945 583 940ZM240 1260 262 1270 255 1290ZM600 1215 617 1235 622 1215ZM390 1508 410 1505 398 1540Z"/>
        <path transform="translate(210 2190) scale(.66327 .52296)" d="M567 55 598 75 585 90ZM515 225 540 235 515 255ZM650 655 690 635 685 610 665 628ZM595 970 625 980 620 940 605 945ZM312 1062 355 1058 352 1040 305 1040Z"/>
        <path transform="translate(1240 2190) scale(.67642 .52296)" d="M1090 325 1120 325 1110 345ZM1072 775 1095 780 1095 750ZM75 1510 90 1500 95 1520 80 1535ZM337 1500 355 1505 350 1525Z"/>
      </g>
    </g>

    <!-- searched location -->
    <radialGradient id="halo" gradientUnits="userSpaceOnUse" cx="1240" cy="2207" r="92"><stop offset=".78" stop-color="#fff" stop-opacity=".25"/><stop offset=".9" stop-color="#fff" stop-opacity=".55"/><stop offset="1" stop-color="#fff" stop-opacity=".9"/></radialGradient>
    <radialGradient id="halo-inner" gradientUnits="userSpaceOnUse" cx="1240" cy="2207" r="73"><stop offset=".7" stop-color="#fff" stop-opacity=".15"/><stop offset="1" stop-color="#fff" stop-opacity=".75"/></radialGradient>
    <circle cx="1240" cy="2207" r="92" fill="url(#halo)"/>
    <circle cx="1240" cy="2207" r="73" fill="url(#halo-inner)"/>
    <circle cx="1240" cy="2207" r="53" fill="#fff"/>
    <circle cx="1240" cy="2207" r="48" fill="#272e5e"/>
    <circle cx="1240" cy="2207" r="41" fill="#0b0c0c"/>

    <g class="pins">
      <circle cx="1070" cy="2138" r="40"/><text x="1071" y="2148">1</text>
      <circle cx="1230" cy="2002" r="40"/><text x="1233" y="2012">2</text>
      <circle cx="1206" cy="2438" r="40"/><text x="1210" y="2448">3</text>
      <circle cx="1580" cy="2438" r="40"/><text x="1584" y="2448">4</text>
      <circle cx="1556" cy="1796" r="40"/><text x="1560" y="1806">5</text>
      <circle cx="1838" cy="1982" r="40"/><text x="1842" y="1992">6</text>
    </g>
  </svg>

  <h2 class="services-title">Our services</h2>
  <section class="services">
    <div class="col col-courses">
      <h3>Courses and classes</h3>
      <ul>
        <li><a href="#">Antenatal course - understanding<br>pregnancy, labour, birth and your baby<br>(online course)</a></li>
        <li class="tight"><a href="#">Developing toddler course</a></li>
        <li class="tight"><a href="#">Incredible years parenting course</a></li>
        <li><a href="#">My developing baby course (referral<br>only)</a></li>
        <li><a href="#">Thriving child course</a></li>
        <li><a href="#">Understanding your teenager’s brain<br>(online course)</a></li>
        <li><a href="#">Understanding your child (online<br>course)</a></li>
        <li class="tight"><a href="#">Understanding your child’s mental<br>health and wellbeing course</a></li>
        <li><a href="#">Understanding your child with<br>additional needs course</a></li>
      </ul>
    </div>
    <div class="col col-health">
      <h3>Health, wellbeing and development<br>clinics</h3>
      <ul>
        <li class="loose"><a href="#">Child and adolescent mental health<br>services (CAMHS)</a></li>
        <li><a href="#">Child health clinic</a></li>
        <li><a href="#">Health visitor</a></li>
        <li><a href="#">Infant feeding clinic</a></li>
        <li><a href="#">Infant feeding group</a></li>
        <li><a href="#">School nurse virtual drop-ins</a></li>
        <li><a href="#">Substance misuse service</a></li>
        <li><a href="#">Torbay maternity services</a></li>
        <li class="loose"><a href="#">Young people’s wellbeing drop in<br>sessions</a></li>
        <li class="close"><a href="#">When you move into the Torbay area -<br>health screening</a></li>
      </ul>
    </div>
    <div class="col col-groups">
      <h3>Infant and toddler groups and<br>support</h3>
      <ul>
        <li><a href="#">Baby massage</a></li>
        <li><a href="#">Breast pump hire</a></li>
        <li><a href="#">Infant feeding advice&nbsp;</a></li>
        <li><a href="#">Perinatal and infant mental health<br>service</a></li>
        <li><a href="#">Talk and play group</a></li>
        <li><a href="#">Tens machine hire</a></li>
      </ul>
      <div class="send">
        <h3>SEND groups</h3>
        <ul>
          <li class="tight"><a href="#">Parent led SEN support session</a></li>
          <li><a href="#">Torbay small steps (SEND group)</a></li>
        </ul>
      </div>
      <div class="family">
        <h3>Family services</h3>
        <ul>
          <li class="loose"><a href="#">Domestic abuse support</a></li>
          <li><a href="#">Family support for those with a child<br>under 5 years</a></li>
          <li class="loose"><a href="#">Services for looked after children</a></li>
        </ul>
      </div>
    </div>
    <div class="scrollbar"><div class="scrollbar-thumb"></div></div>
  </section>
</main>

<footer class="footer">
  <svg class="ogl" viewBox="0 0 82 34" aria-hidden="true"><text x="-1" y="33" textLength="84" lengthAdjust="spacingAndGlyphs">OGL</text></svg>
  <p class="licence">All content is available under the <a href="#">Open Government Licence v3.0</a>, except where otherwise stated</p>
  <div class="copyright">
    <svg class="arms" viewBox="155 113 742 613" aria-hidden="true">
      <g fill="#6f777b">
        <path d="M230 643C270 648 300 610 350 580C385 560 430 575 445 612L452 632C430 624 415 640 421 660C470 680 565 680 612 660C618 640 600 640 580 630C584 590 620 560 680 577C720 598 760 645 803 643C790 660 770 675 750 674C710 670 670 620 628 617C640 630 643 650 632 670C625 700 622 716 595 721C550 728 480 728 440 720C408 712 412 680 403 660C390 645 393 627 408 616C370 620 330 675 280 674C255 670 250 655 230 643Z"/>
        <path fill-rule="evenodd" d="M519 295C590 295 644 358 644 438C644 500 620 540 583 558C548 552 510 545 480 528C462 525 445 545 440 552C410 530 394 490 394 438C394 358 448 295 519 295ZM517 335C468 335 431 380 431 438C431 475 443 505 462 520C490 525 520 545 545 540C580 525 603 486 603 438C603 380 566 335 517 335Z"/>
        <path d="M452 530C480 530 500 548 580 562L583 566C560 590 520 588 500 580L455 566C440 556 440 540 452 530Z"/>
        <path d="M502 592H535V618C525 605 510 605 502 618ZM508 534H537L528 552Z"/>
        <path d="M437 266Q517 250 596 266L588 290Q517 274 447 290Z"/>
        <path d="M428 235 447 258 474 250 490 240 505 258H530L545 240 562 250 588 258 608 235 598 270H437ZM504 226 530 226 522 240 533 250 528 262H506L502 250 512 240ZM474 213 484 232 474 250 464 232ZM560 213 570 232 560 250 550 232Z"/>
        <path d="M500 170H534Q530 186 517 186T500 170ZM503 113 531 113 524 129 534 122V140L524 133 529 146H505L510 133 500 140V122L510 129ZM500 165Q503 148 514 148V165ZM520 148Q531 148 534 165H520ZM508 192h6v30h-6zM520 192h6v30h-6z"/>
        <!-- lion -->
        <path d="M253 228 272 212 360 188 370 200 368 215 385 222 380 234 395 242 390 252 404 262 398 272 405 285 402 300 410 325 424 328 405 350 412 362 395 360 375 358 405 395 430 430 423 462 395 468 402 452 380 458 390 442 365 438 385 425 355 420 362 412 322 408 345 430 360 455 352 485 335 500 352 520 398 528 412 548 395 560 375 555 350 560 320 530 308 495 300 445 290 490 262 520 228 540 232 580 250 595 290 592 288 608 262 622 222 625 205 605 204 575 192 560 194 535 210 528 232 500 245 440 270 395 288 345 290 315 272 325 278 300 262 300 270 275 258 262 266 245Z"/>
        <path d="M265 182 283 194 290 178 302 188 318 170 332 184 274 206ZM282 143h10v18h-10zM278 149h18v6h-18z"/>
        <path d="M156 400C160 360 175 335 190 326L222 322C222 350 205 368 180 372C168 378 160 388 156 400ZM174 462 195 472 240 462 220 478 208 492 190 491 200 482Z"/>
        <!-- unicorn -->
        <path d="M667 130 742 205 734 214ZM745 190 752 206 785 212 808 225 820 255 822 305 812 290 808 335 790 320 772 325 745 300 715 290 735 262 722 258 710 268 704 284 700 266 680 258 690 236 712 220 735 208Z"/>
        <path d="M702 315 792 357 770 372 765 400 790 430 806 468 802 505 820 530 822 590 806 600 805 622 785 628 778 614 795 600 808 580 806 548 790 534 765 528 750 505 752 470 730 482 708 480 715 510 728 518 700 530 660 545 640 560 615 560 640 535 700 512 688 480 695 452 740 442 710 415 690 395 660 380 640 375 650 405 680 430 665 435 640 420 625 365 680 345 655 345 645 328 615 328 625 315 650 318 670 335 685 330Z"/>
        <path d="M845 345C870 350 885 360 885 380C890 390 897 400 895 412C880 385 850 385 845 345ZM820 480 850 490 872 488 850 500 850 512 835 502Z"/>
        <path d="M706 286 800 332 788 355 700 308Z" fill="#f3f2f1" stroke="#6f777b" stroke-width="3"/>
        <path d="M712 295 724 312 736 305 744 320 758 316 764 330 780 328 788 345 706 308Z"/>
      </g>
      <g fill="none" stroke="#6f777b">
        <path stroke-width="7" stroke-linecap="round" stroke-dasharray="0 9" d="M268 192C248 165 265 148 284 158M328 180C345 155 320 140 298 154"/>
        <path stroke-width="8" d="M190 328C225 318 255 315 251 345C240 395 180 420 186 462Q205 480 240 462M845 345C810 342 800 360 815 388C840 420 880 450 868 480Q855 500 822 482"/>
        <path stroke-width="4" d="M517 335V540M431 438H603"/>
        <path stroke-width="4" d="M450 290H585Q596 300 585 311M450 290Q438 300 452 311"/>
        <path stroke-width="4" d="M528 350V428H596Q592 375 528 350ZM540 372Q560 378 572 410M545 412 565 390M540 395 575 405M450 455 500 462 496 515Q470 505 450 455ZM460 470 492 508M468 462 496 500M480 460 498 485"/>
        <path stroke-width="9" stroke-dasharray="9 3" d="M470 366H506M456 390H508M447 418H504M530 458H582M528 483H578M528 510H562"/>
        <path stroke-width="3.5" d="M517 603Q500 625 510 640Q485 650 487 628Q495 612 508 632M517 603Q532 625 524 640Q550 650 547 628Q538 612 526 632M508 652H525M517 640V655"/>
        <circle cx="517" cy="661" r="7" stroke-width="3"/>
        <g stroke-width="3.5"><circle cx="680" cy="312" r="11"/><circle cx="660" cy="338" r="10"/><circle cx="802" cy="420" r="12"/><circle cx="762" cy="546" r="11"/><ellipse cx="787" cy="575" rx="13" ry="11"/><circle cx="836" cy="570" r="11"/><circle cx="865" cy="549" r="18"/></g>
        <path stroke-width="11" stroke-linecap="round" stroke-dasharray="0 14" d="M427 243C405 200 430 175 465 175Q490 176 500 184M608 243C630 200 605 175 570 175Q545 176 535 184"/>
      </g>
      <g fill="#f3f2f1"><path d="M283 232 305 224 302 240ZM325 214 345 205 340 222ZM305 242 335 236 347 275 335 287 322 275ZM462 543 480 534 478 552 490 565 466 568Z"/><circle cx="493" cy="559" r="9"/><circle cx="528" cy="570" r="9"/><circle cx="771" cy="498" r="9"/><circle cx="792" cy="465" r="9"/><circle cx="669" cy="395" r="12"/><path d="M738 228 715 240 733 242Z"/></g>
      <path fill="none" stroke="#f3f2f1" stroke-width="7" d="M367 358 408 392 428 428M616 372Q620 410 640 425"/>
    </svg>
    <span>© Crown copyright</span>
  </div>
</footer>
</body>
</html>
```
FILE: styles.css
```css
/* 1rem is ten design pixels; the design is 2480 wide */
html { font-size: 7.9476px; }
* { box-sizing: border-box; }
body {
  margin: 0;
  background: #fff;
  color: #0b0c0c;
  font: 3.75rem/4.8rem Roboto, "Liberation Sans", sans-serif;
}
h1, h2, h3, p, ul { margin: 0; padding: 0; }
a {
  color: #1d70b8;
  text-decoration: underline;
  text-decoration-thickness: 2px;
  text-underline-offset: .62rem;
  text-decoration-skip-ink: none;
}

.header {
  display: flex;
  height: 10rem;
  padding-left: 22rem;
  background: #0b0c0c;
  color: #fff;
  font-weight: 700;
  line-height: 6rem;
}
.header-crown { width: 7.2rem; height: 5.2rem; margin-top: 1.8rem; }
.header-logo { width: 29.4rem; padding: 1.65rem 0 0 1.1rem; font-size: 5.9rem; letter-spacing: .28rem; }
.header-service { padding-top: 1.55rem; font-size: 4.7rem; letter-spacing: .02rem; }
.header-bar { height: 2rem; margin: 0 22rem; background: #1d70b8; }

main { padding-left: 21.7rem; }

.phase {
  display: flex;
  gap: 2rem;
  width: 192rem;
  margin: 4rem 0 0 .5rem;
  padding-bottom: 1.8rem;
  border-bottom: 2px solid #b1b4b6;
  font-size: 3.1rem;
  line-height: 4.4rem;
}
.phase-tag {
  width: 14.2rem;
  background: #1d70b8;
  color: #fff;
  letter-spacing: .22rem;
  text-align: center;
}
.phase-text { letter-spacing: -.01rem; }
.phase-lead { letter-spacing: -.067rem; }

.back {
  display: flex;
  gap: 1.8rem;
  margin: 3.7rem 0 0 .5rem;
  font-size: 3.1rem;
  line-height: 4rem;
}
.back a { color: #0b0c0c; }
.back-arrow { width: 1.3rem; height: 3rem; margin-top: .7rem; }

.title { margin-top: 3.4rem; font-size: 7.2rem; line-height: 8.8rem; letter-spacing: -.01rem; }
.intro { margin-top: 3.8rem; letter-spacing: -.02rem; }
.intro .snug { letter-spacing: -.053rem; }
.intro-second { margin-top: 4.8rem; }
.intro-second .snug { letter-spacing: -.057rem; }

.search { margin-top: 9.57rem; }
.search-label { display: block; font-size: 3.83rem; font-weight: 700; }
.search-hint { display: block; color: #b1b4b6; letter-spacing: -.035rem; }
.search-row { display: flex; align-items: center; gap: 3.5rem; margin: .7rem 0 0 .1rem; }
.search-input {
  width: 64.3rem;
  height: 8rem;
  padding: 1rem 0 0 2.2rem;
  border: .4rem solid #0b0c0c;
  letter-spacing: -.06rem;
}
.search-button {
  width: 26rem;
  height: 7.6rem;
  padding-top: 1.2rem;
  background: #00703c;
  border-bottom: .4rem solid #002d18;
  color: #fff;
  text-align: center;
  letter-spacing: -.04rem;
}

.tabs {
  display: flex;
  gap: 5.3rem;
  width: 148.4rem;
  height: 6.5rem;
  margin: 5.9rem 0 0 .5rem;
  border-bottom: 2px solid #b1b4b6;
  font-size: 3.8rem;
  font-weight: 700;
}
.tab { text-decoration: none; }
.tab-current { height: 6.5rem; border-bottom: 1rem solid #1d70b8; }

.sort { display: flex; width: 148.4rem; margin: 3.7rem 0 0 .1rem; }
.sort-label { width: 15.8rem; font-size: 3.8rem; }
.sort-current { width: 24.3rem; letter-spacing: -.01rem; }
.sort-link { height: 4.5rem; padding-left: 1.5rem; border-left: 1px solid #b1b4b6; letter-spacing: -.01rem; }
.sort-count { margin-left: auto; letter-spacing: -.035rem; }

.map { display: block; width: 207rem; height: 158.8rem; margin: 7.7rem 0 0 .1rem; }
.map .land { fill: #e7e7e9; }
.map path { vector-effect: non-scaling-stroke; }
.map #tile-a { vector-effect: none; }
.st-a { fill: none; stroke: #d6d7da; stroke-width: 11.5; }
.st-b { fill: none; stroke: #e8e8ea; stroke-width: 6; }
.road-edge { fill: none; stroke: #cfd0d3; stroke-width: 7.5px; stroke-linejoin: round; }
.road-mid { fill: none; stroke: #fafbfc; stroke-width: 5px; stroke-linejoin: round; }
.road-main { fill: none; stroke: #fbfdfd; stroke-width: 11px; stroke-linejoin: round; stroke-linecap: round; }
.road-main .slim { stroke-width: 7px; }
.road-main .wide { stroke-width: 16px; }
.rail { fill: none; stroke: #c8cacd; stroke-width: 10px; }
.rail .thin { stroke-width: 4px; stroke: #cacccf; }
.rail .faint { stroke-width: 14px; stroke: #dcdde0; }
.rail .dash { stroke: #e4e5e7; stroke-width: 3px; stroke-dasharray: 22 18; }
.river { fill: none; stroke: #818a8f; stroke-width: 6.5px; stroke-linejoin: round; }
.river .dashes { stroke-width: 5px; stroke-dasharray: 20 5; }
.river .hair { stroke-width: 1.5px; stroke-dasharray: 10 6; }
.boundary { fill: none; stroke: #272e5e; stroke-width: 7.4px; stroke-linejoin: round; }
.boundary .blob { fill: #272e5e; }
.places, .streets {
  fill: #4c4d50;
  stroke: #e9e9eb;
  stroke-width: 3px;
  paint-order: stroke;
  font-family: "Noto Sans", sans-serif;
}
.places { font-size: 39px; }
.streets { font-size: 27px; }
.pins circle { fill: #1d70b8; }
.pins text { fill: #fff; font-size: 37px; text-anchor: middle; }

.services-title { margin: 9.75rem 0 0 .4rem; font-size: 7.15rem; line-height: 8.8rem; }
.services {
  display: grid;
  grid-template-columns: 69.65rem 69.65rem 65.8rem 1.2rem;
  height: 148.4rem;
  margin: -.2rem 0 0 1.2rem;
}
.col { padding-top: 5.93rem; letter-spacing: -.02rem; }
.col h3 { height: 9.6rem; font-size: 3.83rem; letter-spacing: .01rem; }
.col ul { margin-top: 2rem; list-style: none; }
.col li { margin-bottom: 4.8rem; white-space: nowrap; }
.col li.tight { margin-bottom: 0; }
.col-courses h3 { letter-spacing: -.04rem; }
.col-health { letter-spacing: -.045rem; }
.col-health .loose { letter-spacing: -.026rem; }
.col-health .close { letter-spacing: -.065rem; }
.col-groups { letter-spacing: -.038rem; }
.col-groups h3 { letter-spacing: -.012rem; }
.col .send { margin: 7.33rem 0 0 -.4rem; }
.col .family { margin: 8.07rem 0 0 -.6rem; letter-spacing: -.055rem; }
.family .loose { letter-spacing: -.03rem; }
.send h3, .family h3 { height: 4.8rem; }
.scrollbar { padding: .6rem .4rem 0 .2rem; background: #f3f2f1; }
.scrollbar-thumb { width: .8rem; height: 29.8rem; background: #c4c4c4; }

.footer {
  display: flex;
  align-items: flex-end;
  height: 42.2rem;
  margin-top: 6.6rem;
  padding: 0 28rem 8.2rem;
  border-top: 2px solid #b1b4b6;
  background: #f3f2f1;
  font-size: 2.96rem;
  line-height: 4rem;
  letter-spacing: -.015rem;
}
.footer a { color: #0b0c0c; }
.ogl { width: 8.2rem; height: 3.4rem; margin: 0 1.9rem .2rem 0; overflow: visible; }
.ogl text { font: 900 45px Inter, sans-serif; letter-spacing: -5px; fill: #0b0c0c; stroke: #0b0c0c; stroke-width: 1px; }
.copyright { display: flex; flex-direction: column; align-items: center; margin-left: auto; }
.arms { width: 24.8rem; height: 20.5rem; margin-bottom: .9rem; }
```
